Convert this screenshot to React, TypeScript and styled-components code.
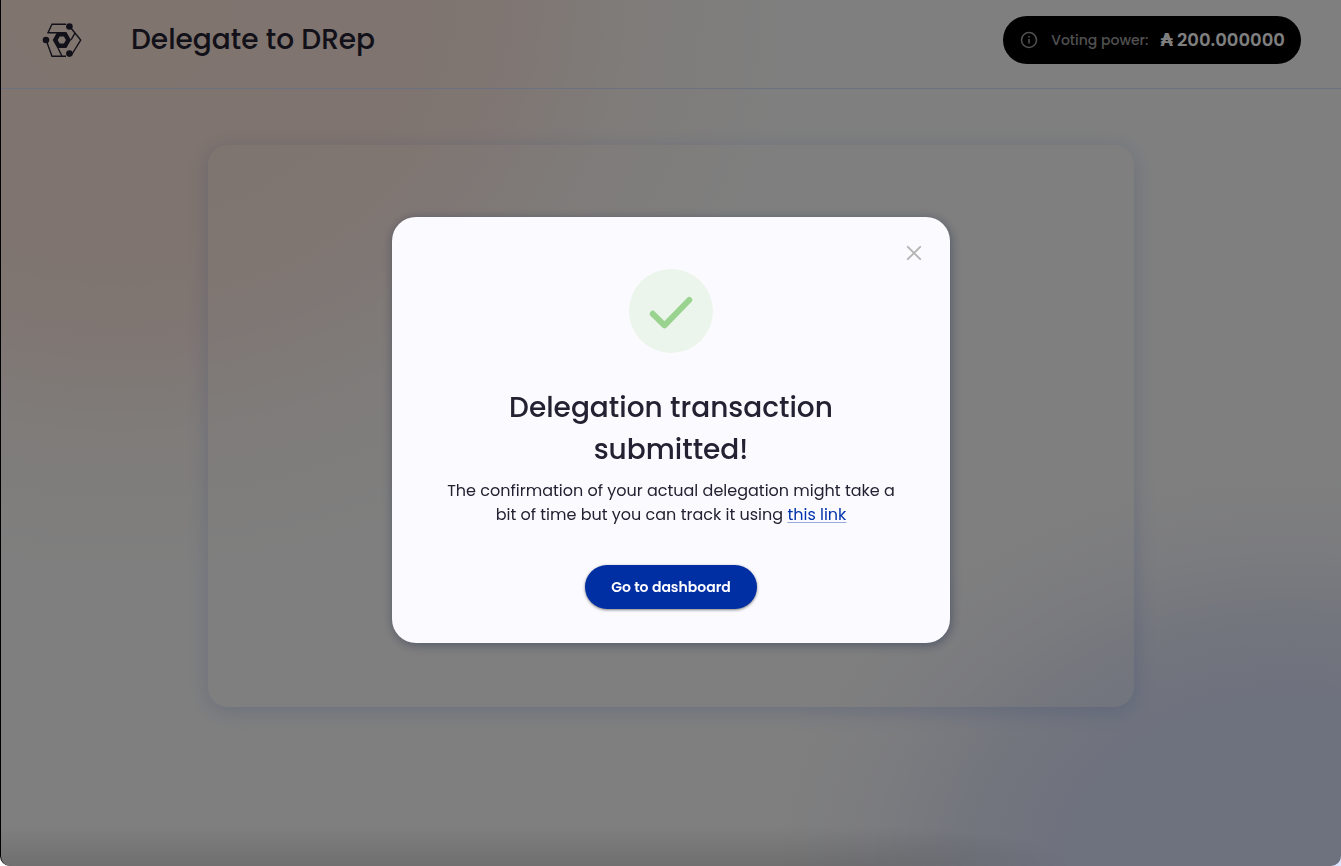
import React from "react";
import styled, { createGlobalStyle } from "styled-components";

const GlobalStyle = createGlobalStyle`
  *, *::before, *::after { box-sizing: border-box; }
  html, body, #root { height: 100%; }
  body {
    margin: 0;
    overflow: hidden;
    color: #242232;
    font-family: Poppins, Inter, "Open Sans", sans-serif;
  }
  h1, h2, p { margin: 0; }
`;

const Page = styled.div`
  min-height: 100vh;
  display: flex;
  flex-direction: column;
  background:
    radial-gradient(ellipse 680px 580px at 120px 0, #ffe8dc 0, #ffe9df 45%, #ffeee8 60%, rgba(255, 246, 240, 0.7) 76%, rgba(255, 255, 255, 0) 100%),
    radial-gradient(ellipse 530px 400px at 1290px 100%, #dce3fc 0, #dde4fc 42%, #e7ecfb 62%, rgba(244, 246, 255, 0.7) 80%, rgba(255, 255, 255, 0) 100%),
    #fff;
`;

const Header = styled.header`
  display: flex;
  align-items: center;
  gap: 48px;
  padding: 16px 40px 24px 42px;
  border-bottom: 1px solid #d6e2ff;
`;

const LogoLink = styled.a`
  display: flex;
  color: #242232;
`;

const PageTitle = styled.h1`
  flex: 1;
  font-size: 28px;
  font-weight: 500;
  line-height: 42px;
`;

const VotingPower = styled.div`
  display: flex;
  align-items: center;
  height: 48px;
  padding: 0 16px;
  border-radius: 24px;
  background: #000;
  color: #fff;
`;

const PowerLabel = styled.span`
  margin: 0 12px;
  color: #a0a0a0;
  font-size: 14px;
  font-weight: 500;
`;

const PowerValue = styled.span`
  display: flex;
  align-items: baseline;
  gap: 4px;
  font-size: 18px;
  font-weight: 600;
  line-height: 24px;
`;

const CurrencySymbol = styled.span`
  font-family: "DejaVu Sans", sans-serif;
  font-size: 18px;
  font-weight: 700;
`;

const Main = styled.main`
  display: flex;
  flex: 1;
  align-items: flex-start;
  justify-content: center;
  padding: 56px 24px;
`;

const Panel = styled.section`
  width: 100%;
  max-width: 926px;
  min-height: 562px;
  border-radius: 20px;
  background: rgba(255, 255, 255, 0.1);
  box-shadow: 0 4px 20px 2px rgba(47, 98, 220, 0.18);
`;

const Backdrop = styled.div`
  position: fixed;
  inset: 0;
  display: flex;
  align-items: center;
  justify-content: center;
  padding: 0 16px 6px;
  border-left: 1px solid #000;
  border-radius: 0 0 10px 10px;
  background:
    linear-gradient(to top, rgba(0, 0, 0, 0.12), rgba(0, 0, 0, 0) 40px) 0 0 / 65% 100% no-repeat,
    radial-gradient(ellipse 200px 40px at 0 100%, rgba(0, 0, 0, 0.12), rgba(0, 0, 0, 0)) 100% 0 / 35% 100% no-repeat,
    rgba(0, 0, 0, 0.5);
`;

const Dialog = styled.div`
  position: relative;
  display: flex;
  flex-direction: column;
  align-items: center;
  width: 100%;
  max-width: 558px;
  padding: 52px 48px 34px;
  border-radius: 24px;
  background: #fbfbff;
  box-shadow: 1px 2px 11px rgba(0, 18, 61, 0.37);
  text-align: center;
`;

const CloseButton = styled.button`
  position: absolute;
  top: 24px;
  right: 24px;
  display: flex;
  padding: 0;
  border: 0;
  background: none;
  color: #b4b4b4;
  cursor: pointer;
`;

const DialogTitle = styled.h2`
  max-width: 400px;
  margin-top: 34px;
  font-size: 28px;
  font-weight: 500;
  line-height: 42px;
`;

const Message = styled.p`
  margin-top: 8px;
  font-size: 16px;
  line-height: 24px;
`;

const TrackLink = styled.a`
  color: #0033ad;
  text-decoration: underline;
  text-decoration-color: rgba(0, 51, 173, 0.4);
  text-decoration-thickness: 1px;
  text-underline-offset: 2px;
`;

const PrimaryButton = styled.button`
  height: 44px;
  margin-top: 38px;
  padding: 0 26px;
  border: 0;
  border-radius: 22px;
  background: #002ea3;
  box-shadow: 0 1px 3px rgba(0, 0, 0, 0.5);
  color: #fff;
  font: inherit;
  font-size: 14px;
  font-weight: 600;
  cursor: pointer;
`;

const Logo = () => (
  <svg width="41" height="38" viewBox="0 0 41 38" fill="none" stroke="currentColor" strokeWidth="1.4" aria-hidden="true">
    <path d="M24 3.2H10L6 11.8M5.3 11.8H17M28.5 6.5L38.7 19 29.5 34M32.8 12.3L29 19M5 21.5L10 35.2H24M16 27L20 35.2" />
    <path d="M13.2 19L16.5 13.2H23.1L26.4 19 23.1 24.8H16.5Z" strokeWidth="4.4" />
    <g fill="currentColor" stroke="none">
      <circle cx="27.4" cy="5.5" r="3.3" />
      <circle cx="4" cy="19" r="3.3" />
      <circle cx="27.4" cy="32.6" r="3.3" />
    </g>
  </svg>
);

const InfoIcon = () => (
  <svg width="20" height="20" viewBox="0 0 20 20" fill="none" stroke="#a0a0a0" strokeWidth="1.6" aria-hidden="true">
    <circle cx="10" cy="10" r="7.5" />
    <path d="M10 9V13.5M10 6V7.6" />
  </svg>
);

const SuccessIcon = () => (
  <svg width="84" height="84" viewBox="0 0 84 84" fill="none" aria-hidden="true">
    <circle cx="42" cy="42" r="42" fill="#ebf5eb" />
    <path d="M23.8 44.8L35.5 56.3 60.2 31" stroke="#99d38f" strokeWidth="6" strokeLinecap="round" strokeLinejoin="round" />
  </svg>
);

const CloseIcon = () => (
  <svg width="24" height="24" viewBox="0 0 24 24" fill="none" stroke="currentColor" strokeWidth="1.9" strokeLinecap="round" aria-hidden="true">
    <path d="M5.8 5.8L18.2 18.2M18.2 5.8L5.8 18.2" />
  </svg>
);

export default function App() {
  return (
    <>
      <GlobalStyle />
      <Page>
        <Header>
          <LogoLink href="#" aria-label="Home">
            <Logo />
          </LogoLink>
          <PageTitle>Delegate to DRep</PageTitle>
          <VotingPower>
            <InfoIcon />
            <PowerLabel>Voting power:</PowerLabel>
            <PowerValue>
              <CurrencySymbol>₳</CurrencySymbol>
              <span>200.000000</span>
            </PowerValue>
          </VotingPower>
        </Header>
        <Main>
          <Panel />
        </Main>
      </Page>
      <Backdrop>
        <Dialog role="dialog" aria-modal="true" aria-labelledby="dialog-title">
          <CloseButton type="button" aria-label="Close">
            <CloseIcon />
          </CloseButton>
          <SuccessIcon />
          <DialogTitle id="dialog-title">Delegation transaction submitted!</DialogTitle>
          <Message>
            The confirmation of your actual delegation might take a bit of time but you can track it using{" "}
            <TrackLink href="#">this link</TrackLink>
          </Message>
          <PrimaryButton type="button">Go to dashboard</PrimaryButton>
        </Dialog>
      </Backdrop>
    </>
  );
}
